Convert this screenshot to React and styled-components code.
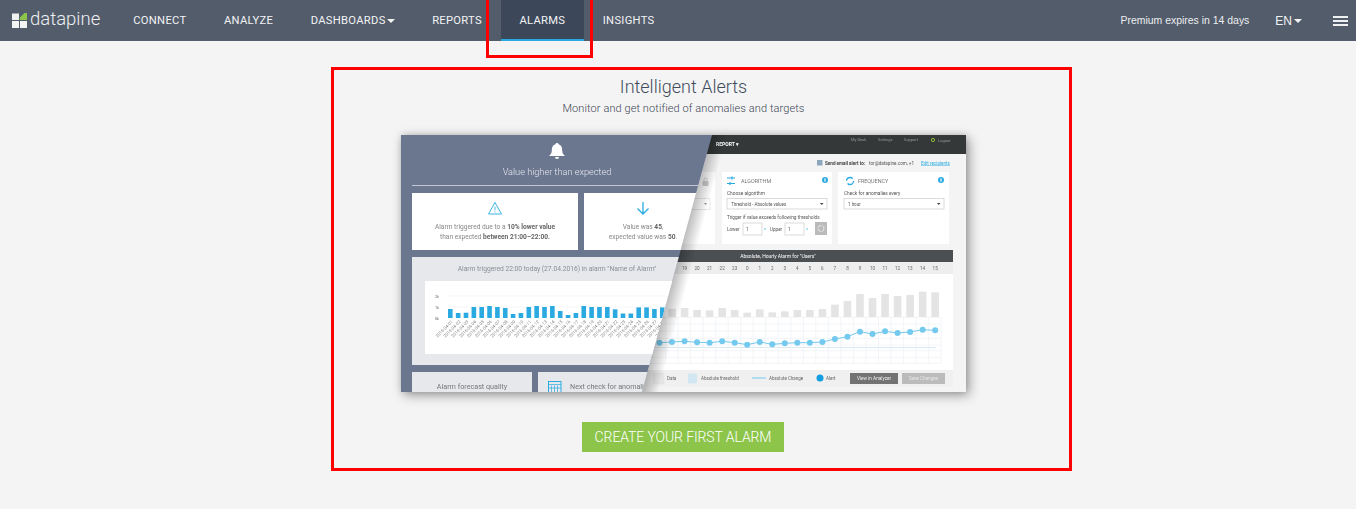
import React from "react";
import styled, { createGlobalStyle } from "styled-components";

const Global = createGlobalStyle`
  html, body { margin: 0; padding: 0; background: #f4f4f4; }
  body { font-family: Roboto, "Liberation Sans", sans-serif; height: 509px; overflow: hidden; }
`;
const Page = styled.div`position: relative; height: 509px;`;
const Header = styled.header`
  display: flex; align-items: stretch; height: 41px; background: #535c6b; color: #fff; padding: 0 8px 0 12px;
`;
const Brand = styled.div`display: flex; align-items: center; width: 102.5px; gap: 3px;`;
const BrandName = styled.span`font: 300 18.5px/1 Roboto, sans-serif; color: #eef0f2; position: relative; top: -1px;`;
const Nav = styled.nav`display: flex; align-items: stretch; flex: 1;`;
const NavItem = styled.a`
  display: flex; align-items: center; gap: 1px; padding: 0 18.75px; font: 400 11.2px Roboto, sans-serif; letter-spacing: .3px;
  color: #f2f3f5; box-sizing: border-box;
  background: ${p => (p.$active ? "#3c4759" : "transparent")};
  border-bottom: 2px solid ${p => (p.$active ? "#29abe2" : "transparent")};
  border-top: 2px solid transparent;
`;
const Caret = styled.i`
  display: inline-block; width: 0; height: 0; border-left: 4px solid transparent; border-right: 4px solid transparent;
  border-top: 4px solid #f2f3f5; margin-left: ${p => p.$gap || 0}px;
`;
const Right = styled.div`display: flex; align-items: center;`;
const Premium = styled.span`font: 400 10.45px "Liberation Sans", Arial, sans-serif; color: #eceef0; margin-right: 26px;`;
const Lang = styled.span`display: flex; align-items: center; font: 400 12px "Liberation Sans", Arial, sans-serif; color: #f2f3f5; margin-right: 31px;`;
const Burger = styled.div`display: flex; flex-direction: column; gap: 2px; width: 15px;`;
const BurgerBar = styled.i`display: block; height: 2px; background: #eef0f2;`;

const Main = styled.main`
  display: flex; flex-direction: column; align-items: center; padding: 36px 0 0 11px;
`;
const Title = styled.h1`margin: 0; font: 300 18px/20px Roboto, sans-serif; color: #3f4c5e;`;
const Sub = styled.p`margin: 4px 0 0; font: 300 11px/16px Roboto, sans-serif; letter-spacing: .09px; color: #3c4554;`;
const Shot = styled.div`
  width: 565px; height: 257px; margin-top: 18px; box-shadow: 3px 3px 11px rgba(0,0,0,.38), 0 0 6px rgba(0,0,0,.12); overflow: hidden;
`;
const ShotSvg = styled.svg`display: block; filter: blur(.3px);`;
const Cta = styled.button`
  margin: 30px 2px 0 0; width: 202px; height: 30px; border: 0; padding: 0 0 0 1px; background: #8dc54b; color: #fff;
  font: 300 14px Roboto, sans-serif; letter-spacing: -.1px;
`;
const Mark = styled.div`
  position: absolute; box-sizing: border-box; border: 3px solid #f00; pointer-events: none;
  left: ${p => p.$x}px; top: ${p => p.$y}px; width: ${p => p.$w}px; height: ${p => p.$h}px;
`;
const T = styled.text`
  font-family: Roboto, sans-serif; font-size: ${p => p.$s || 5}px; fill: ${p => p.$c || "#777"};
  font-weight: ${p => p.$w || 400}; text-anchor: ${p => p.$a || "start"}; dominant-baseline: central;
`;

const blue = [9,5,5.3,11,11,12,11,10,4,5,11,12,11,12,7,3,5,12,11,11,11,8.7,4.5,4.5,10.6,10.6,9,10.6,10,11,8,11];
const hours = [17,18,19,20,21,22,23,0,1,2,3,4,5,6,7,8,9,10,11,12,13,14,15];
const barTop = [148,146,144,150,151,144,150,158,148,157,154,150,150,147,134,123,102,114,102,108,105,95,97];
const dots = [248,246,244,247,248,244,248,254,246,253,250,248,248,246,237,230,215,222,214,219,216,209,211];
const hx = i => 258.5 + i * 12.53;
const ty = t => 125 + t / 3;
const polyline = dots.map((t, i) => `${hx(i)},${ty(t)}`).join(" ");

function Bell({ x, y }) {
  return (
    <g transform={`translate(${x} ${y})`} fill="#fff">
      <path d="M0-8c1 0 1.5.6 1.5 1.3C4 -6 5.2-3.7 5.2-1c0 3 .8 4.200 2.300 5.300v.8h-15v-.8C-6 3.200-5.200 2-5.200-1c0-2.700 1.200-5 3.700-5.700C-1.500-7.400-1-8 0-8z" />
      <path d="M-2 6h4a2 2 0 0 1-4 0z" />
    </g>
  );
}

function Info({ x, y }) {
  return (
    <g>
      <circle cx={x} cy={y} r="3" fill="#29a9e0" />
      <rect x={x - 0.6} y={y - 1.6} width="1.2" height="3.2" fill="#fff" />
    </g>
  );
}

function Illustration() {
  return (
    <ShotSvg width="565" height="257" viewBox="0 0 565 257" xmlns="http://www.w3.org/2000/svg">
      <defs>
        <clipPath id="leftClip"><polygon points="0,0 311,0 241,257 0,257" /></clipPath>
        <linearGradient id="edge" gradientUnits="userSpaceOnUse" x1="276" y1="128" x2="291" y2="132">
          <stop offset="0" stopColor="#000" stopOpacity=".26" />
          <stop offset="1" stopColor="#000" stopOpacity="0" />
        </linearGradient>
      </defs>

      {/* right: product screen */}
      <rect width="565" height="257" fill="#f4f4f4" />
      <rect width="565" height="19" fill="#343838" />
      <T x="315" y="9" $s="5" $c="#fff" $w="700">REPORT ▾</T>
      <T x="450" y="4" $s="4" $c="#999">My Desk</T>
      <T x="477" y="4" $s="4" $c="#999">Settings</T>
      <T x="503" y="4" $s="4" $c="#999">Support</T>
      <circle cx="532" cy="5" r="1.600" fill="none" stroke="#9c3" strokeWidth=".9" />
      <T x="537" y="5" $s="4" $c="#999">Logout</T>

      <rect x="416" y="25" width="5.500" height="5.500" fill="#8fa7bd" />
      <T x="424" y="28" $s="4.600" $c="#444" $w="700">Send email alert to:</T>
      <T x="468" y="28" $s="4.600" $c="#555">tor@datapine.com, +1</T>
      <T x="520" y="28" $s="4.600" $c="#29abe2" textDecoration="underline">Edit recipients</T>

      <rect x="240" y="37" width="74" height="72" fill="#fff" />
      <rect x="301.500" y="46" width="6" height="5" rx="1" fill="#ccc" />
      <path d="M303 46v-1.500a1.500 1.500 0 0 1 3 0V46" fill="none" stroke="#ccc" />
      <rect x="270" y="63.500" width="39" height="11" fill="#fff" stroke="#ddd" strokeWidth=".7" />
      <path d="M303 68h3l-1.500 2z" fill="#999" />

      <rect x="321" y="37" width="110" height="72" fill="#fff" />
      <path d="M326 43h8M326 48.500h8M331 41.500v3M329 47v3" stroke="#29abe2" strokeWidth="1.200" fill="none" />
      <T x="340" y="46" $s="5.400" $c="#777">ALGORITHM</T>
      <Info x={424} y={45} />
      <T x="326" y="58" $s="4.800" $c="#555">Choose algorithm</T>
      <rect x="326" y="63.500" width="100" height="10.500" fill="#fff" stroke="#ccc" strokeWidth=".7" />
      <T x="330" y="69" $s="4.500" $c="#555">Threshold - Absolute values</T>
      <path d="M419 68h3.500l-1.750 2z" fill="#444" />
      <T x="326" y="82" $s="4.700" $c="#555">Trigger if value exceeds following thresholds</T>
      <T x="326" y="94" $s="4.600" $c="#555">Lower</T>
      <rect x="342" y="88" width="19" height="12" fill="#fff" stroke="#ccc" strokeWidth=".7" />
      <T x="345" y="94" $s="4.600" $c="#555">1</T>
      <circle cx="364" cy="94" r=".7" fill="#29abe2" />
      <T x="369" y="94" $s="4.600" $c="#555">Upper</T>
      <rect x="384" y="88" width="19" height="12" fill="#fff" stroke="#ccc" strokeWidth=".7" />
      <T x="387" y="94" $s="4.600" $c="#555">1</T>
      <circle cx="406" cy="94" r=".7" fill="#29abe2" />
      <rect x="414" y="87" width="12" height="13" fill="#bbb" />
      <circle cx="420" cy="93.500" r="3" fill="none" stroke="#eee" strokeWidth=".9" strokeDasharray="4 1" />

      <rect x="437" y="37" width="111" height="72" fill="#fff" />
      <circle cx="449" cy="46" r="3.500" fill="none" stroke="#29abe2" strokeWidth="1.300" strokeDasharray="8 3" />
      <T x="457" y="46" $s="5.400" $c="#777">FREQUENCY</T>
      <Info x={540} y={45} />
      <T x="443" y="58" $s="4.800" $c="#555">Check for anomalies every</T>
      <rect x="443" y="63.500" width="100" height="10.500" fill="#fff" stroke="#ccc" strokeWidth=".7" />
      <T x="447" y="69" $s="4.500" $c="#555">1 hour</T>
      <path d="M536 68h3.500l-1.750 2z" fill="#444" />

      <rect x="240" y="115" width="312" height="137" fill="#fff" />
      <rect x="240" y="115" width="312" height="12" fill="#4b4f52" />
      <T x="377" y="121" $s="5" $c="#fff" $a="middle">Absolute, Hourly Alarm for "Users"</T>
      <rect x="240" y="127" width="312" height="12" fill="#eeeeee" />
      {hours.map((h, i) => <T key={i} x={hx(i)} y="133" $s="4.600" $c="#666" $a="middle">{h}</T>)}
      {hours.map((h, i) => (
        <rect key={i} x={hx(i) - 3.800} y={ty(barTop[i])} width="7.600" height={182 - ty(barTop[i])} fill="#e4e4e4" />
      ))}
      {[172,192,213,235,255,272,292,310].map(t => <path key={t} d={`M240 ${ty(t)}H540`} stroke="#eef1f5" strokeWidth=".7" />)}
      {hours.map((h, i) => <path key={i} d={`M${hx(i) + 6} 182V228`} stroke="#eef1f5" strokeWidth=".7" />)}
      <path d="M240 212.500H535" stroke="#cfe5f0" strokeWidth=".8" />
      <polyline points={polyline} fill="none" stroke="#74c9ee" strokeWidth="1" />
      {dots.map((t, i) => <circle key={i} cx={hx(i)} cy={ty(t)} r="3" fill="#74c9ee" />)}
      <rect x="240" y="235" width="312" height="17" fill="#f0f0f0" />
      <rect x="252" y="238" width="11" height="11" fill="#e6e6e6" stroke="#ddd" strokeWidth=".5" />
      <T x="266" y="243" $s="4.500" $c="#666">Data</T>
      <rect x="287" y="238.500" width="9" height="10" fill="#d3e7f2" />
      <T x="300" y="243" $s="4.500" $c="#666">Absolute threshold</T>
      <path d="M351 243h14" stroke="#74c9ee" strokeWidth="1" />
      <T x="368" y="243" $s="4.500" $c="#666">Absolute Change</T>
      <circle cx="419" cy="243" r="3.500" fill="#129ee0" />
      <T x="425" y="243" $s="4.500" $c="#666">Alert</T>
      <rect x="449" y="238" width="48" height="11" fill="#737373" />
      <T x="473" y="243.500" $s="4.700" $c="#eee" $a="middle">View in Analyzer</T>
      <rect x="501" y="238" width="43" height="11" fill="#bbb" />
      <T x="522.500" y="243.500" $s="4.700" $c="#e8e8e8" $a="middle">Save Changes</T>

      <polygon points="311,0 330,0 260,257 241,257" fill="url(#edge)" />

      {/* left: alert e-mail */}
      <g clipPath="url(#leftClip)">
        <rect width="320" height="257" fill="#6b768f" />
        <Bell x={156} y={16} />
        <T x="156" y="36" $s="9.200" $c="#e6e9ef" $w="300" $a="middle">Value higher than expected</T>
        <rect x="11" y="50" width="310" height=".9" fill="#cdd2dc" />
        <rect x="11" y="58" width="166" height="57" fill="#fff" />
        <path d="M94 67.500l6.500 11.500h-13z" fill="none" stroke="#29abe2" strokeWidth=".9" />
        <path d="M94 71.500v4M94 76.500v1" stroke="#29abe2" strokeWidth=".8" />
        <T x="94" y="92" $s="6.600" $c="#888" $a="middle">Alarm triggered due to a <tspan fontWeight="700" fill="#666">10% lower value</tspan></T>
        <T x="94" y="102" $s="6.600" $c="#888" $a="middle">than expected <tspan fontWeight="700" fill="#666">between 21:00–22:00.</tspan></T>
        <rect x="183" y="58" width="130" height="57" fill="#fff" />
        <path d="M242 67v12M236.500 73.500l5.500 5.500 5.500-5.500" fill="none" stroke="#29abe2" strokeWidth="1.300" />
        <T x="242" y="92" $s="6.600" $c="#888" $a="middle">Value was <tspan fontWeight="700" fill="#666">45</tspan>,</T>
        <T x="242" y="102" $s="6.600" $c="#888" $a="middle">expected value was <tspan fontWeight="700" fill="#666">50</tspan>.</T>
        <rect x="11" y="122" width="300" height="108" fill="#e6e8ec" />
        <T x="156" y="134" $s="6.700" $c="#8a8f99" $a="middle">Alarm triggered 22:00 today (27.04.2016) in alarm "Name of Alarm"</T>
        <rect x="24" y="146" width="280" height="73" fill="#fff" />
        <T x="36" y="161" $s="3.800" $c="#666" $a="middle">2k</T>
        <T x="36" y="172" $s="3.800" $c="#666" $a="middle">1k</T>
        <T x="36" y="183" $s="3.800" $c="#666" $a="middle">0k</T>
        <path d="M46 161H300M46 172H300" stroke="#f0f0f0" strokeWidth=".6" />
        {blue.map((h, i) => <rect key={i} x={47 + i * 7.85} y={183 - h} width="4.600" height={h} fill="#2ba9e1" />)}
        {blue.map((h, i) => (
          <T key={i} x={51 + i * 7.85} y="186" $s="4.400" $c="#8a8a8a" $a="end" transform={`rotate(-45 ${51 + i * 7.85} 186)`}>
            {`2016-04-${String(i + 1).padStart(2, "0")}`}
          </T>
        ))}
        <rect x="11" y="237" width="120" height="20" fill="#e6e8ec" />
        <T x="71" y="251" $s="7.200" $c="#777" $a="middle">Alarm forecast quality</T>
        <rect x="137" y="237" width="120" height="20" fill="#e6e8ec" />
        <rect x="147.500" y="246.500" width="12.500" height="12" fill="none" stroke="#29abe2" strokeWidth="1" />
        <path d="M147.500 249.500h12.500M150.500 250.500v8M153.500 250.500v8M156.500 250.500v8M147.500 253h12.500" stroke="#29abe2" strokeWidth=".7" />
        <T x="169" y="251" $s="7.200" $c="#777">Next check for anomalies</T>
      </g>
    </ShotSvg>
  );
}

export default function App() {
  return (
    <Page>
      <Global />
      <Header>
        <Brand>
          <svg width="15" height="15" viewBox="0 0 15 15">
            <path d="M0 .5h7v6.500H0z" fill="#f0f0f0" />
            <path d="M7.800 7V4.500L12.500 0H15v7z" fill="#8dc54b" />
            <path d="M0 8h7v7H0zM8 8h7v7H8z" fill="#f4f4f4" />
          </svg>
          <BrandName>datapine</BrandName>
        </Brand>
        <Nav>
          <NavItem>CONNECT</NavItem>
          <NavItem>ANALYZE</NavItem>
          <NavItem>DASHBOARDS<Caret /></NavItem>
          <NavItem>REPORTS</NavItem>
          <NavItem $active>ALARMS</NavItem>
          <NavItem>INSIGHTS</NavItem>
        </Nav>
        <Right>
          <Premium>Premium expires in 14 days</Premium>
          <Lang>EN<Caret $gap={2} /></Lang>
          <Burger><BurgerBar /><BurgerBar /><BurgerBar /></Burger>
        </Right>
      </Header>
      <Main>
        <Title>Intelligent Alerts</Title>
        <Sub>Monitor and get notified of anomalies and targets</Sub>
        <Shot><Illustration /></Shot>
        <Cta>CREATE YOUR FIRST ALARM</Cta>
      </Main>
      <Mark $x={486} $y={-3} $w={107} $h={61} />
      <Mark $x={331} $y={67} $w={741} $h={404} />
    </Page>
  );
}
